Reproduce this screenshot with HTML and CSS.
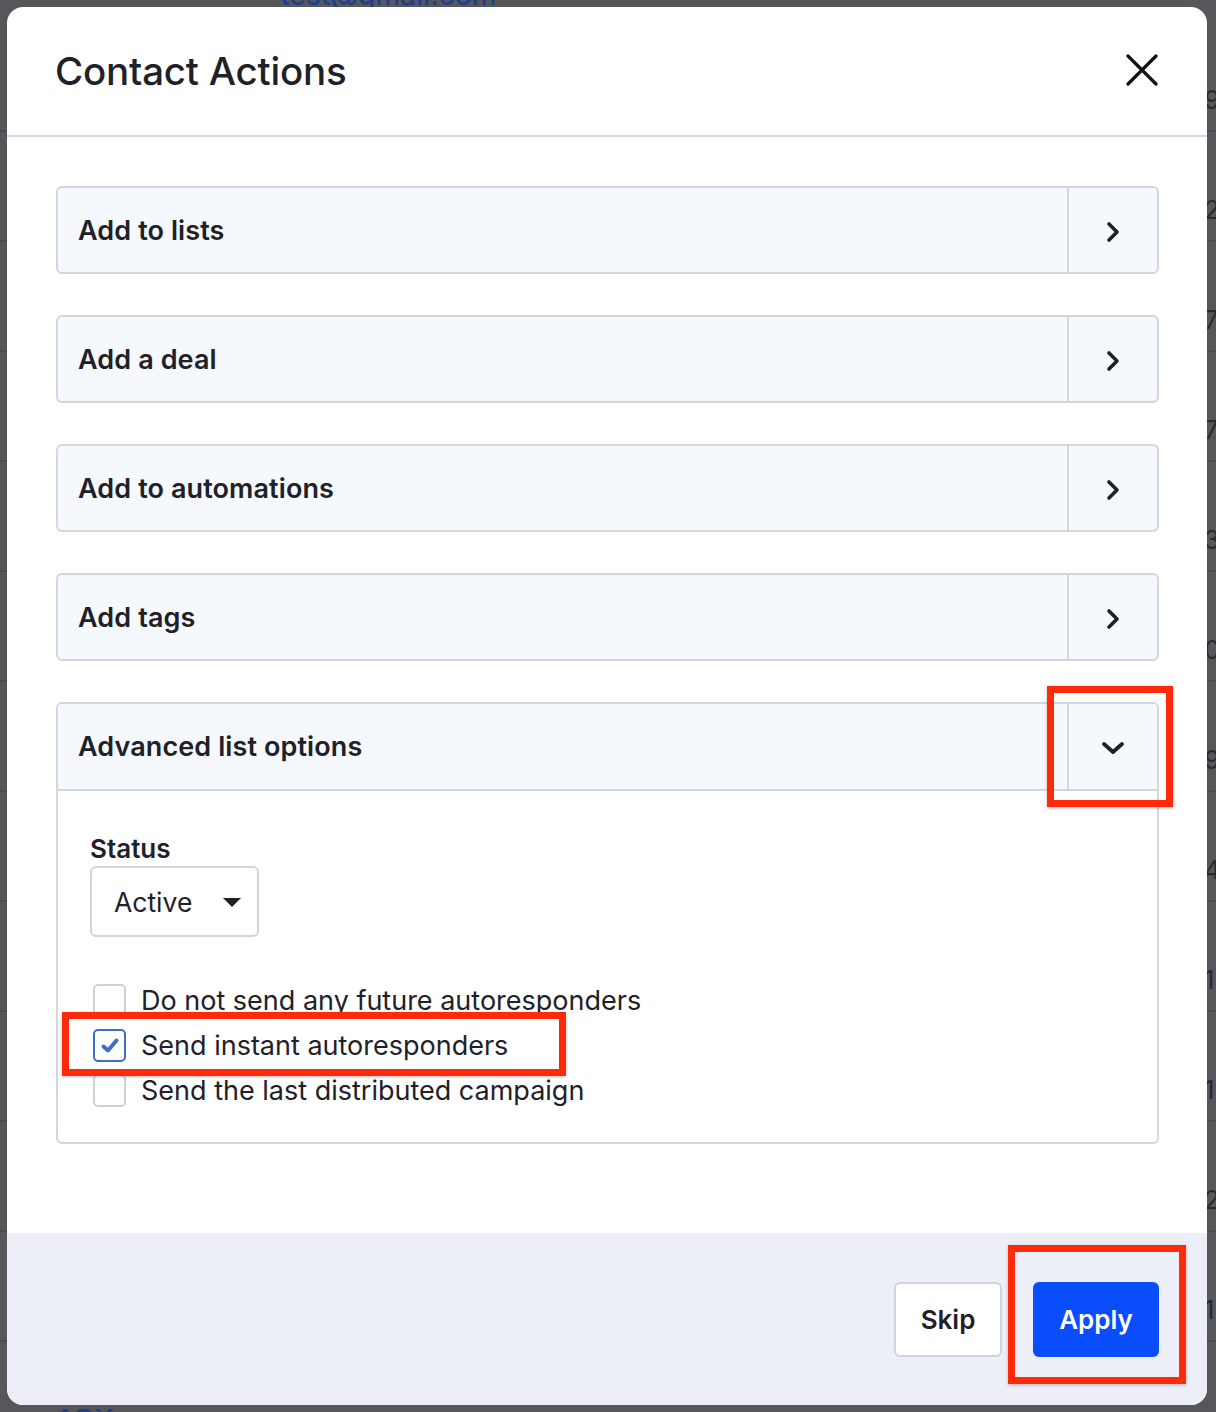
FILE: index.html
```html
<!DOCTYPE html>
<html lang="en">
<head>
<meta charset="utf-8">
<title>Contact Actions</title>
<link rel="stylesheet" href="styles.css">
</head>
<body>
<div class="backdrop">
  <div class="bg-top">test@gmail.com</div>
  <div class="bg-digits">
    <span>9</span><span>2</span><span>7</span><span>7</span><span>3</span><span>0</span><span>9</span><span>4</span><span>1</span><span>1</span><span>2</span><span>1</span>
  </div>
  <div class="bg-bottom">ABX</div>
</div>

<div class="modal">
  <header class="modal-header">
    <h1 class="title">Contact Actions</h1>
    <button class="close" aria-label="Close">
      <svg width="32" height="32" viewBox="0 0 32 32"><path d="M2 2 L30 30 M30 2 L2 30" stroke="#111" stroke-width="3.2" stroke-linecap="round" fill="none"/></svg>
    </button>
  </header>

  <div class="modal-body">
    <div class="row"><span class="row-label">Add to lists</span><span class="row-icon"><svg width="14" height="22" viewBox="0 0 14 22"><path d="M3 3 L11 11 L3 19" stroke="#1f2128" stroke-width="3.6" fill="none" stroke-linecap="round" stroke-linejoin="round"/></svg></span></div>
    <div class="row"><span class="row-label">Add a deal</span><span class="row-icon"><svg width="14" height="22" viewBox="0 0 14 22"><path d="M3 3 L11 11 L3 19" stroke="#1f2128" stroke-width="3.6" fill="none" stroke-linecap="round" stroke-linejoin="round"/></svg></span></div>
    <div class="row"><span class="row-label">Add to automations</span><span class="row-icon"><svg width="14" height="22" viewBox="0 0 14 22"><path d="M3 3 L11 11 L3 19" stroke="#1f2128" stroke-width="3.6" fill="none" stroke-linecap="round" stroke-linejoin="round"/></svg></span></div>
    <div class="row"><span class="row-label">Add tags</span><span class="row-icon"><svg width="14" height="22" viewBox="0 0 14 22"><path d="M3 3 L11 11 L3 19" stroke="#1f2128" stroke-width="3.6" fill="none" stroke-linecap="round" stroke-linejoin="round"/></svg></span></div>

    <div class="panel">
      <div class="row row-open"><span class="row-label">Advanced list options</span><span class="row-icon"><svg width="24" height="16" viewBox="0 0 24 16"><path d="M3 4 L12 12 L21 4" stroke="#1f2128" stroke-width="3.8" fill="none" stroke-linecap="round" stroke-linejoin="round"/></svg></span></div>
      <div class="panel-body">
        <label class="field-label">Status</label>
        <div class="select"><span>Active</span><span class="caret"></span></div>
        <div class="checks">
          <div class="check"><span class="box"></span><span>Do not send any future autoresponders</span></div>
          <div class="check"><span class="box checked"><svg width="20" height="18" viewBox="0 0 20 18"><path d="M3.5 9.5 L8 13.5 L16.5 3.5" stroke="#3d6fc6" stroke-width="4" fill="none" stroke-linecap="round" stroke-linejoin="round"/></svg></span><span>Send instant autoresponders</span></div>
          <div class="check"><span class="box"></span><span>Send the last distributed campaign</span></div>
        </div>
      </div>
    </div>
  </div>

  <footer class="modal-footer">
    <button class="btn btn-skip">Skip</button>
    <button class="btn btn-apply">Apply</button>
  </footer>
</div>

<div class="mark mark-chevron"></div>
<div class="mark mark-check"></div>
<div class="mark mark-apply"></div>
</body>
</html>
```

FILE: styles.css
```css
* { box-sizing: border-box; }

html, body {
  margin: 0;
  padding: 0;
}

body {
  width: 1216px;
  height: 1412px;
  background: #57575b;
  font-family: "Inter", "Noto Sans", sans-serif;
  color: #1f2128;
  position: relative;
  overflow: hidden;
  padding: 7px 9px 7px 7px;
}

.backdrop {
  position: absolute;
  inset: 0;
  background-image: repeating-linear-gradient(to bottom, transparent 0, transparent 108px, #4c4c50 108px, #4c4c50 110px);
  background-position: 0 22px;
}

.bg-top {
  position: absolute;
  left: 280px;
  top: -22px;
  font-size: 28px;
  color: #1c3f8f;
  font-weight: 500;
}

.bg-bottom {
  position: absolute;
  left: 55px;
  top: 1403px;
  font-size: 28px;
  color: #1c3f8f;
  font-weight: 600;
}

.bg-digits {
  position: absolute;
  left: 1204px;
  top: 85px;
  display: flex;
  flex-direction: column;
  font-size: 26px;
  color: #2a2a2d;
}

.bg-digits span {
  height: 110px;
  line-height: 30px;
}

.modal {
  position: relative;
  width: 1200px;
  height: 1398px;
  background: #fff;
  border-radius: 16px;
  overflow: hidden;
  display: flex;
  flex-direction: column;
}

.modal-header {
  height: 130px;
  flex: none;
  display: flex;
  align-items: center;
  justify-content: space-between;
  padding: 0 48px 0 48px;
  border-bottom: 2px solid #d5d8e0;
}

.title {
  margin: 0;
  font-size: 38.5px;
  font-weight: 500;
  letter-spacing: -0.2px;
  color: #1f2128;
}

.close {
  border: 0;
  background: none;
  padding: 0;
  width: 32px;
  height: 32px;
  margin-right: 1px;
  margin-bottom: 2px;
  cursor: pointer;
}

.modal-body {
  flex: 1;
  padding: 49px 48px 0 49px;
  display: flex;
  flex-direction: column;
  gap: 41px;
}

.row {
  height: 88px;
  display: flex;
  align-items: stretch;
  background: #f5f8fd;
  border: 2px solid #d2d6de;
  border-radius: 6px;
}

.row-label {
  flex: 1;
  display: flex;
  align-items: center;
  padding-left: 20px;
  font-size: 27px;
  font-weight: 600;
  letter-spacing: 0.1px;
}

.row-icon {
  width: 90px;
  flex: none;
  border-left: 2px solid #d2d6de;
  display: flex;
  align-items: center;
  justify-content: center;
  padding-top: 4px;
}

.panel {
  border: 2px solid #d2d6de;
  border-radius: 6px;
  overflow: hidden;
}

.row-open {
  border: 0;
  border-bottom: 2px solid #d2d6de;
  border-radius: 0;
  height: 87px;
}

.row-open .row-icon {
  padding-top: 2px;
}

.panel-body {
  padding: 42px 32px 29px 32px;
  display: flex;
  flex-direction: column;
  align-items: flex-start;
}

.field-label {
  font-size: 26px;
  font-weight: 600;
  line-height: 32px;
}

.select {
  margin-top: 1px;
  width: 169px;
  height: 71px;
  border: 2px solid #d0d4dc;
  border-radius: 6px;
  display: flex;
  align-items: center;
  justify-content: space-between;
  padding: 0 16px 0 22px;
  font-size: 26.5px;
  background: #fff;
}

.caret {
  width: 0;
  height: 0;
  border-left: 9px solid transparent;
  border-right: 9px solid transparent;
  border-top: 9px solid #1f2128;
  margin-top: 1px;
}

.checks {
  margin-top: 41px;
  display: flex;
  flex-direction: column;
}

.check {
  height: 45px;
  display: flex;
  align-items: center;
  gap: 15px;
  font-size: 27px;
  padding-left: 3px;
}

.box {
  width: 33px;
  height: 33px;
  border: 2px solid #cdd1d9;
  border-radius: 5px;
  background: #fff;
  flex: none;
  display: flex;
  align-items: center;
  justify-content: center;
}

.box.checked {
  border-color: #3d6fc6;
}

.modal-footer {
  height: 172px;
  flex: none;
  background: #eceff7;
  display: flex;
  align-items: center;
  justify-content: flex-end;
  gap: 31px;
  padding: 0 48px;
}

.btn {
  height: 75px;
  border-radius: 6px;
  font-family: inherit;
  font-size: 26px;
  font-weight: 600;
  cursor: pointer;
}

.btn-skip {
  width: 108px;
  background: #fff;
  border: 2px solid #d0d4dc;
  color: #1f2128;
}

.btn-apply {
  width: 126px;
  background: #0a4dfd;
  border: 0;
  color: #fff;
}

.mark {
  position: absolute;
  border: 7px solid #ff2a0a;
  pointer-events: none;
  box-shadow: 0 1px 3px rgba(0,0,0,0.25);
}

.mark-chevron {
  left: 1047px;
  top: 686px;
  width: 126px;
  height: 121px;
}

.mark-check {
  left: 62px;
  top: 1012px;
  width: 504px;
  height: 64px;
}

.mark-apply {
  left: 1008px;
  top: 1245px;
  width: 178px;
  height: 139px;
}
```
